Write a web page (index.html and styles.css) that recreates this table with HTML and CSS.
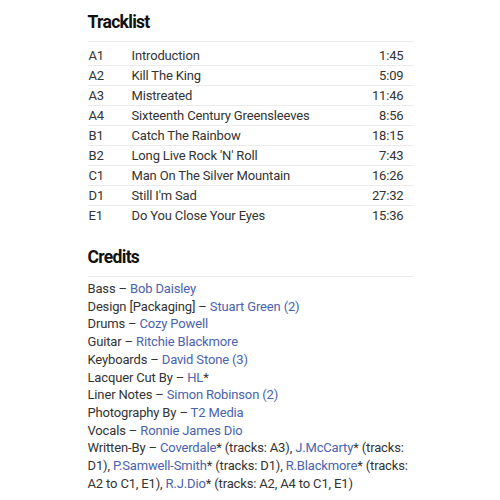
FILE: index.html
```html
<!DOCTYPE html>
<html>
<head>
<meta charset="utf-8">
<link rel="stylesheet" href="styles.css">
</head>
<body>
<main class="page">
  <section class="section">
    <h2 class="section-title">Tracklist</h2>
    <div class="tracks">
      <div class="track"><span class="pos">A1</span><span class="title">Introduction</span><span class="dur">1:45</span></div>
      <div class="track"><span class="pos">A2</span><span class="title">Kill The King</span><span class="dur">5:09</span></div>
      <div class="track"><span class="pos">A3</span><span class="title">Mistreated</span><span class="dur">11:46</span></div>
      <div class="track"><span class="pos">A4</span><span class="title">Sixteenth Century Greensleeves</span><span class="dur">8:56</span></div>
      <div class="track"><span class="pos">B1</span><span class="title">Catch The Rainbow</span><span class="dur">18:15</span></div>
      <div class="track"><span class="pos">B2</span><span class="title">Long Live Rock 'N' Roll</span><span class="dur">7:43</span></div>
      <div class="track"><span class="pos">C1</span><span class="title">Man On The Silver Mountain</span><span class="dur">16:26</span></div>
      <div class="track"><span class="pos">D1</span><span class="title">Still I'm Sad</span><span class="dur">27:32</span></div>
      <div class="track"><span class="pos">E1</span><span class="title">Do You Close Your Eyes</span><span class="dur">15:36</span></div>
    </div>
  </section>
  <section class="section credits-section">
    <h2 class="section-title">Credits</h2>
    <ul class="credits">
      <li>Bass – <a href="#">Bob Daisley</a></li>
      <li>Design [Packaging] – <a href="#">Stuart Green (2)</a></li>
      <li>Drums – <a href="#">Cozy Powell</a></li>
      <li>Guitar – <a href="#">Ritchie Blackmore</a></li>
      <li>Keyboards – <a href="#">David Stone (3)</a></li>
      <li>Lacquer Cut By – <a href="#">HL</a>*</li>
      <li>Liner Notes – <a href="#">Simon Robinson (2)</a></li>
      <li>Photography By – <a href="#">T2 Media</a></li>
      <li>Vocals – <a href="#">Ronnie James Dio</a></li>
      <li>Written-By – <a href="#">Coverdale</a>* (tracks: A3), <a href="#">J.McCarty</a>* (tracks: D1), <a href="#">P.Samwell-Smith</a>* (tracks: D1), <a href="#">R.Blackmore</a>* (tracks: A2 to C1, E1), <a href="#">R.J.Dio</a>* (tracks: A2, A4 to C1, E1)</li>
    </ul>
  </section>
</main>
</body>
</html>
```
FILE: styles.css
```css
html, body {
  margin: 0;
  padding: 0;
  background: #fff;
}
body {
  font-family: Roboto, "Liberation Sans", sans-serif;
  color: #333;
  font-size: 13px;
  letter-spacing: -0.15px;
}
.page {
  width: 325px;
  margin: 0 auto;
  padding-top: 10px;
}
.section-title {
  margin: 0;
  font-size: 17.5px;
  font-weight: 700;
  letter-spacing: -0.7px;
  line-height: 24px;
  color: #111;
  padding-bottom: 7px;
  border-bottom: 1px solid #ebebeb;
}
.tracks {
  margin-top: 3px;
}
.track {
  display: grid;
  grid-template-columns: 43px 1fr auto;
  align-items: center;
  box-sizing: border-box;
  height: 20px;
  padding: 0 9px 0 1px;
  border-top: 1px solid #ebebeb;
  line-height: 19px;
}
.track:first-child {
  border-top: none;
}
.dur {
  text-align: right;
}
.credits-section {
  margin-top: 20px;
}
.credits {
  list-style: none;
  margin: 3px 0 0;
  padding: 0;
  line-height: 17.7px;
}
.credits a {
  color: #4a62ad;
  text-decoration: none;
}
```
